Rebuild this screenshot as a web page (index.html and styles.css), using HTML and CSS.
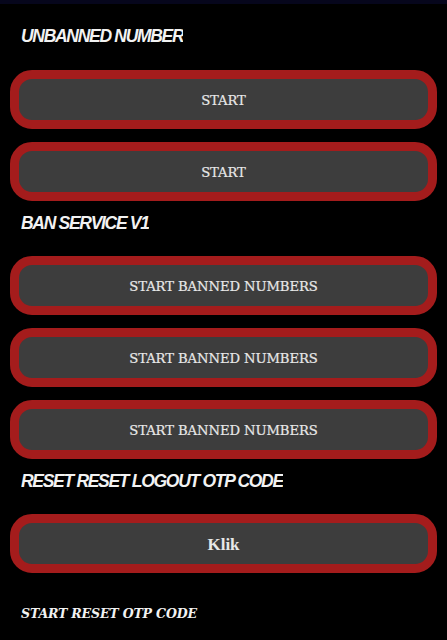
FILE: index.html
```html
<!DOCTYPE html>
<html>
<head>
<meta charset="utf-8">
<link rel="stylesheet" href="styles.css">
</head>
<body>
<div class="topbar"></div>
<main class="screen">
  <h2 class="title first"><span>UNBANNED NUMBER</span></h2>
  <div class="group">
    <button class="btn">START</button>
    <button class="btn">START</button>
  </div>
  <h2 class="title"><span>BAN SERVICE V1</span></h2>
  <div class="group">
    <button class="btn">START BANNED NUMBERS</button>
    <button class="btn">START BANNED NUMBERS</button>
    <button class="btn">START BANNED NUMBERS</button>
  </div>
  <h2 class="title"><span>RESET RESET LOGOUT OTP CODE</span></h2>
  <div class="group">
    <button class="btn btn-serif">Klik</button>
  </div>
  <p class="note">START RESET OTP CODE</p>
</main>
</body>
</html>
```
FILE: styles.css
```css
html, body {
  margin: 0;
  padding: 0;
  background: #000;
  width: 447px;
  height: 640px;
  overflow: hidden;
}

.topbar {
  height: 4px;
  background: #06061c;
}

.screen {
  padding: 0 10px;
}

.title {
  margin: 10px 0 21px 11px;
  height: 24px;
  line-height: 24px;
  font-family: "Liberation Sans", Arial, sans-serif;
  font-weight: bold;
  font-style: italic;
  font-size: 17.5px;
  letter-spacing: -1.3px;
  color: #f2f2f2;
}

.title span {
  display: inline-block;
  overflow: hidden;
  vertical-align: top;
  white-space: nowrap;
}

.title.first {
  margin-top: 20px;
  margin-bottom: 22px;
}

.group {
  display: flex;
  flex-direction: column;
  gap: 13px;
}

.btn {
  display: block;
  width: 100%;
  height: 59px;
  margin: 0;
  padding: 2px 0 0;
  box-sizing: border-box;
  border: 9px solid #a41c1c;
  border-radius: 22px;
  background: #3d3d3d;
  color: #e8e8e8;
  font-family: "DejaVu Serif", serif;
  font-size: 13.2px;
  letter-spacing: -0.1px;
  -webkit-text-stroke: 0.2px #e8e8e8;
  text-align: center;
}

.btn-serif {
  font-family: "Liberation Serif", "Times New Roman", serif;
  font-weight: bold;
  font-size: 17px;
  letter-spacing: 0;
  -webkit-text-stroke: 0;
}

.note {
  margin: 29px 0 0 11px;
  height: 24px;
  line-height: 24px;
  font-family: "DejaVu Serif", serif;
  font-weight: bold;
  font-style: italic;
  font-size: 12.6px;
  letter-spacing: -0.2px;
  color: #f2f2f2;
}
```
